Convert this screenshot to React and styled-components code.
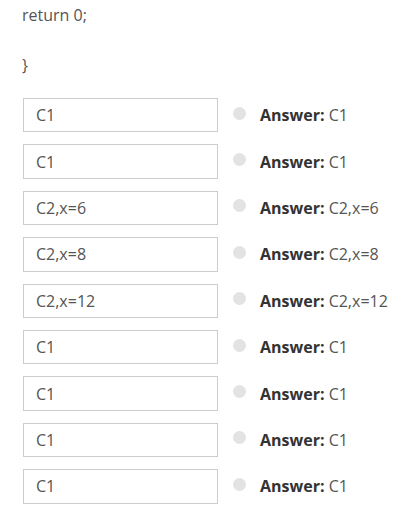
import React from "react";
import styled, { createGlobalStyle } from "styled-components";

const Global = createGlobalStyle`
  html, body { margin: 0; padding: 0; background: #fff; }
  body { font-family: "Open Sans", "Noto Sans", sans-serif; font-size: 16px; color: #555; }
`;

const Page = styled.div`
  padding: 4px 0 0 22px;
`;

const CodeLine = styled.p`
  margin: 0 0 28px 0;
  line-height: 22px;
  font-size: 16px;
  color: #555;
`;

const List = styled.div`
  display: flex;
  flex-direction: column;
  margin-top: -6px;
  padding-left: 1px;
`;

const Row = styled.div`
  display: flex;
  align-items: center;
  height: 34.4px;
  margin-bottom: 12px;
`;

const Field = styled.input`
  box-sizing: border-box;
  width: 195px;
  height: 100%;
  border: 1px solid #ccc;
  padding: 0 12px;
  font-family: inherit;
  font-size: 16px;
  color: #555;
  background: #fff;
  outline: none;
`;

const Dot = styled.span`
  width: 13px;
  height: 13px;
  border-radius: 50%;
  background: #e3e3e3;
  margin: 0 14px 0 15px;
  position: relative;
  top: -2px;
  flex: none;
`;

const Answer = styled.span`
  font-size: 16px;
  color: #555;
  b { color: #333; font-weight: 700; }
`;

const answers = ["C1", "C1", "C2,x=6", "C2,x=8", "C2,x=12", "C1", "C1", "C1", "C1"];

export default function App() {
  return (
    <>
      <Global />
      <Page>
        <CodeLine>return 0;</CodeLine>
        <CodeLine>{"}"}</CodeLine>
        <List>
          {answers.map((a, i) => (
            <Row key={i}>
              <Field defaultValue={a} readOnly />
              <Dot />
              <Answer>
                <b>Answer:</b> {a}
              </Answer>
            </Row>
          ))}
        </List>
      </Page>
    </>
  );
}
